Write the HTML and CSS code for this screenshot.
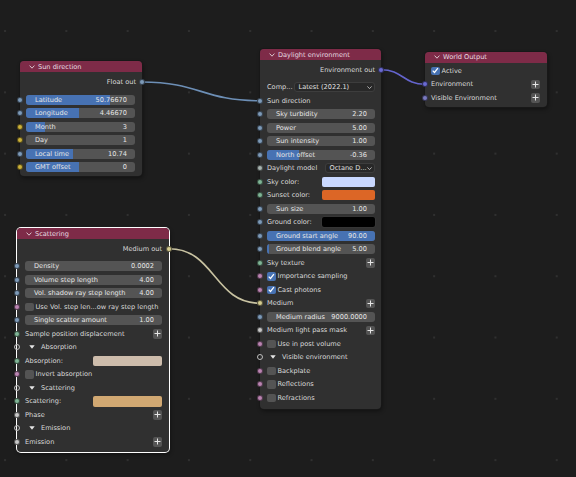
FILE: index.html
```html
<!DOCTYPE html>
<html>
<head>
<meta charset="utf-8">
<link rel="stylesheet" href="styles.css">
</head>
<body>
<div class="canvas">
  <svg class="links" width="576" height="477" viewBox="0 0 576 477">
    <path d="M142 82 C 200 82, 202 100.75, 260 100.75" stroke="#6d8fb6" stroke-width="1.6" fill="none"/>
    <path d="M169 248.75 C 215 248.75, 214 303.25, 260 303.25" stroke="#c9c3a2" stroke-width="1.6" fill="none"/>
    <path d="M381 69.75 C 403 69.75, 403 84.25, 425 84.25" stroke="#6464cc" stroke-width="1.6" fill="none"/>
  </svg>

  <!-- Sun direction -->
  <div class="node sun">
    <div class="hdr"><svg class="chev" width="6" height="4" viewBox="0 0 6 4"><path d="M0.6 0.6 L3 3.2 L5.4 0.6" stroke="#e2d6db" stroke-width="0.9" fill="none"/></svg><span>Sun direction</span></div>
    <div class="body">
      <div class="row out"><span class="lbl">Float out</span><i class="sock r c-float"></i></div>
      <div class="row"><i class="sock c-float"></i><div class="field"><div class="fill" style="width:77%"></div><span class="t">Latitude</span><span class="t">50.76670</span></div></div>
      <div class="row"><i class="sock c-float"></i><div class="field"><div class="fill" style="width:49%"></div><span class="t">Longitude</span><span class="t">4.46670</span></div></div>
      <div class="row"><i class="sock c-int"></i><div class="field"><div class="fill" style="width:17%"></div><span class="t">Month</span><span class="t">3</span></div></div>
      <div class="row"><i class="sock c-int"></i><div class="field"><span class="t">Day</span><span class="t">1</span></div></div>
      <div class="row"><i class="sock c-float"></i><div class="field"><div class="fill" style="width:43%"></div><span class="t">Local time</span><span class="t">10.74</span></div></div>
      <div class="row"><i class="sock c-int"></i><div class="field"><div class="fill" style="width:49%"></div><span class="t">GMT offset</span><span class="t">0</span></div></div>
    </div>
  </div>

  <!-- Scattering -->
  <div class="node scat">
    <div class="hdr"><svg class="chev" width="6" height="4" viewBox="0 0 6 4"><path d="M0.6 0.6 L3 3.2 L5.4 0.6" stroke="#e2d6db" stroke-width="0.9" fill="none"/></svg><span>Scattering</span></div>
    <div class="body">
      <div class="row out"><span class="lbl">Medium out</span><i class="sock r c-med"></i></div>
      <div class="row"><i class="sock c-float"></i><div class="field"><span class="t">Density</span><span class="t">0.0002</span></div></div>
      <div class="row"><i class="sock c-float"></i><div class="field"><span class="t">Volume step length</span><span class="t">4.00</span></div></div>
      <div class="row"><i class="sock c-float"></i><div class="field"><span class="t">Vol. shadow ray step length</span><span class="t">4.00</span></div></div>
      <div class="row"><i class="sock c-bool"></i><i class="cb"></i><span class="lbl cbl">Use Vol. step len...ow ray step length</span></div>
      <div class="row"><i class="sock c-float"></i><div class="field"><span class="t">Single scatter amount</span><span class="t">1.00</span></div></div>
      <div class="row"><i class="sock c-tex"></i><span class="lbl">Sample position displacement</span><span class="plus"><svg width="9" height="9" viewBox="0 0 9 9"><path d="M4.5 1.5v6M1.5 4.5h6" stroke="#e6e6e6" stroke-width="1"/></svg></span></div>
      <div class="row panel"><i class="sock hollow"></i><svg class="tri" width="6" height="4" viewBox="0 0 6 4"><path d="M0.3 0.3h5.4L3 3.8z" fill="#e6e6e6"/></svg><span class="lbl">Absorption</span></div>
      <div class="row"><i class="sock c-tex"></i><span class="lbl">Absorption:</span><span class="sw wide" style="background:#cdbcab"></span></div>
      <div class="row"><i class="sock c-bool"></i><i class="cb"></i><span class="lbl cbl">Invert absorption</span></div>
      <div class="row panel"><i class="sock hollow"></i><svg class="tri" width="6" height="4" viewBox="0 0 6 4"><path d="M0.3 0.3h5.4L3 3.8z" fill="#e6e6e6"/></svg><span class="lbl">Scattering</span></div>
      <div class="row"><i class="sock c-tex"></i><span class="lbl">Scattering:</span><span class="sw wide" style="background:#d1a872"></span></div>
      <div class="row"><i class="sock c-white"></i><span class="lbl">Phase</span><span class="plus"><svg width="9" height="9" viewBox="0 0 9 9"><path d="M4.5 1.5v6M1.5 4.5h6" stroke="#e6e6e6" stroke-width="1"/></svg></span></div>
      <div class="row panel"><i class="sock hollow"></i><svg class="tri" width="6" height="4" viewBox="0 0 6 4"><path d="M0.3 0.3h5.4L3 3.8z" fill="#e6e6e6"/></svg><span class="lbl">Emission</span></div>
      <div class="row"><i class="sock c-white"></i><span class="lbl">Emission</span><span class="plus"><svg width="9" height="9" viewBox="0 0 9 9"><path d="M4.5 1.5v6M1.5 4.5h6" stroke="#e6e6e6" stroke-width="1"/></svg></span></div>
    </div>
  </div>

  <!-- Daylight environment -->
  <div class="node day">
    <div class="hdr"><svg class="chev" width="6" height="4" viewBox="0 0 6 4"><path d="M0.6 0.6 L3 3.2 L5.4 0.6" stroke="#e2d6db" stroke-width="0.9" fill="none"/></svg><span>Daylight environment</span></div>
    <div class="body">
      <div class="row out"><span class="lbl">Environment out</span><i class="sock r c-env"></i></div>
      <div class="row"><span class="lbl comp">Comp...</span><span class="dd grow"><span>Latest (2022.1)</span><svg width="5" height="3" viewBox="0 0 5 3"><path d="M0.4 0.4 L2.5 2.6 L4.6 0.4" stroke="#cfcfcf" stroke-width="0.8" fill="none"/></svg></span></div>
      <div class="row"><i class="sock c-float"></i><span class="lbl">Sun direction</span></div>
      <div class="row"><i class="sock c-float"></i><div class="field"><span class="t">Sky turbidity</span><span class="t">2.20</span></div></div>
      <div class="row"><i class="sock c-float"></i><div class="field"><span class="t">Power</span><span class="t">5.00</span></div></div>
      <div class="row"><i class="sock c-float"></i><div class="field"><span class="t">Sun intensity</span><span class="t">1.00</span></div></div>
      <div class="row"><i class="sock c-float"></i><div class="field"><div class="fill" style="width:30%"></div><span class="t">North offset</span><span class="t">-0.36</span></div></div>
      <div class="row"><i class="sock c-enum"></i><span class="lbl">Daylight model</span><span class="dd small"><span>Octane D...</span><svg width="5" height="3" viewBox="0 0 5 3"><path d="M0.4 0.4 L2.5 2.6 L4.6 0.4" stroke="#cfcfcf" stroke-width="0.8" fill="none"/></svg></span></div>
      <div class="row"><i class="sock c-tex"></i><span class="lbl">Sky color:</span><span class="sw" style="background:#c9d8ff"></span></div>
      <div class="row"><i class="sock c-tex"></i><span class="lbl">Sunset color:</span><span class="sw" style="background:#dc6626"></span></div>
      <div class="row"><i class="sock c-float"></i><div class="field"><span class="t">Sun size</span><span class="t">1.00</span></div></div>
      <div class="row"><i class="sock c-float"></i><span class="lbl">Ground color:</span><span class="sw black"></span></div>
      <div class="row"><i class="sock c-float"></i><div class="field"><div class="fill" style="width:100%"></div><span class="t">Ground start angle</span><span class="t">90.00</span></div></div>
      <div class="row"><i class="sock c-float"></i><div class="field"><div class="fill" style="width:2%"></div><span class="t">Ground blend angle</span><span class="t">5.00</span></div></div>
      <div class="row"><i class="sock c-tex"></i><span class="lbl">Sky texture</span><span class="plus"><svg width="9" height="9" viewBox="0 0 9 9"><path d="M4.5 1.5v6M1.5 4.5h6" stroke="#e6e6e6" stroke-width="1"/></svg></span></div>
      <div class="row"><i class="sock c-bool"></i><i class="cb on"><svg width="9" height="9" viewBox="0 0 9 9"><path d="M1.8 4.6 L3.7 6.6 L7.3 2" stroke="#fff" stroke-width="1.3" fill="none"/></svg></i><span class="lbl cbl">Importance sampling</span></div>
      <div class="row"><i class="sock c-bool"></i><i class="cb on"><svg width="9" height="9" viewBox="0 0 9 9"><path d="M1.8 4.6 L3.7 6.6 L7.3 2" stroke="#fff" stroke-width="1.3" fill="none"/></svg></i><span class="lbl cbl">Cast photons</span></div>
      <div class="row"><i class="sock c-med"></i><span class="lbl">Medium</span><span class="plus"><svg width="9" height="9" viewBox="0 0 9 9"><path d="M4.5 1.5v6M1.5 4.5h6" stroke="#e6e6e6" stroke-width="1"/></svg></span></div>
      <div class="row"><i class="sock c-float"></i><div class="field"><span class="t">Medium radius</span><span class="t">9000.0000</span></div></div>
      <div class="row"><i class="sock c-white"></i><span class="lbl">Medium light pass mask</span><span class="plus"><svg width="9" height="9" viewBox="0 0 9 9"><path d="M4.5 1.5v6M1.5 4.5h6" stroke="#e6e6e6" stroke-width="1"/></svg></span></div>
      <div class="row"><i class="sock c-bool"></i><i class="cb"></i><span class="lbl cbl">Use in post volume</span></div>
      <div class="row panel"><i class="sock hollow"></i><svg class="tri" width="6" height="4" viewBox="0 0 6 4"><path d="M0.3 0.3h5.4L3 3.8z" fill="#e6e6e6"/></svg><span class="lbl">Visible environment</span></div>
      <div class="row"><i class="sock c-bool"></i><i class="cb"></i><span class="lbl cbl">Backplate</span></div>
      <div class="row"><i class="sock c-bool"></i><i class="cb"></i><span class="lbl cbl">Reflections</span></div>
      <div class="row"><i class="sock c-bool"></i><i class="cb"></i><span class="lbl cbl">Refractions</span></div>
    </div>
  </div>

  <!-- World Output -->
  <div class="node world">
    <div class="hdr"><svg class="chev" width="6" height="4" viewBox="0 0 6 4"><path d="M0.6 0.6 L3 3.2 L5.4 0.6" stroke="#e2d6db" stroke-width="0.9" fill="none"/></svg><span>World Output</span></div>
    <div class="body">
      <div class="row"><i class="cb on"><svg width="9" height="9" viewBox="0 0 9 9"><path d="M1.8 4.6 L3.7 6.6 L7.3 2" stroke="#fff" stroke-width="1.3" fill="none"/></svg></i><span class="lbl cbl">Active</span></div>
      <div class="row"><i class="sock c-env"></i><span class="lbl">Environment</span><span class="plus"><svg width="9" height="9" viewBox="0 0 9 9"><path d="M4.5 1.5v6M1.5 4.5h6" stroke="#e6e6e6" stroke-width="1"/></svg></span></div>
      <div class="row"><i class="sock c-env2"></i><span class="lbl">Visible Environment</span><span class="plus"><svg width="9" height="9" viewBox="0 0 9 9"><path d="M4.5 1.5v6M1.5 4.5h6" stroke="#e6e6e6" stroke-width="1"/></svg></span></div>
    </div>
  </div>
</div>
</body>
</html>
```

FILE: styles.css
```css
* { box-sizing: border-box; }
html, body { margin: 0; padding: 0; }
body {
  width: 576px;
  height: 477px;
  overflow: hidden;
  background: #1d1d1d;
  font-family: "DejaVu Sans", "Liberation Sans", sans-serif;
  font-size: 6.6px;
  color: #dadada;
}
.canvas {
  position: relative;
  width: 576px;
  height: 477px;
  background-color: #1d1d1d;
  background-image: radial-gradient(circle, #303030 0.8px, transparent 1.2px);
  background-size: 61.3px 61.3px;
  background-position: -25.6px 0.4px;
}
.links { position: absolute; left: 0; top: 0; }

.node {
  position: absolute;
  background: #303030;
  border-radius: 4px;
  box-shadow: 0 0 0 1px #181818, 1px 2px 4px rgba(0,0,0,0.45);
}
.node.sun { left: 20px; top: 61.25px; width: 122px; }
.node.scat { left: 17px; top: 228px; width: 152px; box-shadow: 0 0 0 1px #ffffff, 1px 2px 4px rgba(0,0,0,0.45); }
.node.day { left: 260px; top: 49px; width: 121px; }
.node.world { left: 425px; top: 51.5px; width: 122px; }

.hdr {
  height: 11px;
  background: #7e2b48;
  border-radius: 4px 4px 0 0;
  display: flex;
  align-items: center;
  padding-left: 9px;
  gap: 3px;
  color: #e6dce0;
  white-space: nowrap;
}
.chev { flex: none; }

.body { display: flex; flex-direction: column; padding: 3px 0 2.5px; }
.world .body { padding-top: 1.5px; padding-bottom: 2px; }
.scat .body { padding-bottom: 3.5px; }
.day .body { padding-bottom: 4px; }

.row {
  position: relative;
  height: 13.5px;
  display: flex;
  align-items: center;
  padding: 0 6px 0 7px;
  white-space: nowrap;
}
.sun .row { padding: 0 7px 0 6px; }
.scat .row { padding: 0 7px 0 8px; }
.world .row { padding: 0 7px 0 6px; }
.row.out { justify-content: flex-end; margin-bottom: 4px; }
.sun .row.out { padding-right: 6px; }

.lbl { color: #dadada; }
.cbl { margin-left: 2px; }
.row.panel .tri { margin-left: 4px; margin-right: 6px; flex: none; }
.day .row.panel .tri { margin-left: 3px; }

.sock {
  position: absolute;
  left: -3px;
  top: 50%;
  width: 6px;
  height: 6px;
  margin-top: -3px;
  border-radius: 50%;
  border: 0.8px solid rgba(0,0,0,0.55);
}
.sock.r { left: auto; right: -3px; }
.c-float { background: #7d9ab8; }
.c-int { background: #cdb23a; }
.c-tex { background: #7fb596; }
.c-bool { background: #bb84b2; }
.c-white { background: #c8c8c8; }
.c-med { background: #d6cd90; }
.c-env { background: #6a6ad2; }
.c-env2 { background: #7a7ac0; }
.c-enum { background: #a8b4b0; }
.sock.hollow { background: transparent; border: 0.8px solid #bdbdbd; }

.field {
  position: relative;
  flex: 1;
  height: 10px;
  background: #545454;
  border-radius: 3px;
  overflow: hidden;
  display: flex;
  align-items: center;
  justify-content: space-between;
  padding: 0 8px 0 9px;
  color: #e6e6e6;
}
.fill { position: absolute; left: 0; top: 0; bottom: 0; background: #4772b3; }
.field .t { position: relative; }

.dd {
  height: 10px;
  background: #282828;
  border: 1px solid #3d3d3d;
  border-radius: 3px;
  display: flex;
  align-items: center;
  justify-content: space-between;
  padding: 0 2px 0 4px;
  color: #e0e0e0;
  overflow: hidden;
}
.dd.grow { flex: 1; }
.dd.small { width: 50.5px; margin-left: auto; }
.comp { width: 26.5px; flex: none; }

.sw {
  margin-left: auto;
  width: 53.5px;
  height: 10px;
  border-radius: 2px;
}
.sw.wide { width: 69px; height: 10.5px; }
.sw.black { background: #000000; box-shadow: 0 0 0 0.6px #3a3a3a; }

.plus {
  margin-left: auto;
  width: 9.5px;
  height: 9.5px;
  border-radius: 2px;
  background: #545454;
  display: flex;
  align-items: center;
  justify-content: center;
}
.plus svg { display: block; }

.cb {
  flex: none;
  width: 8.5px;
  height: 8.5px;
  border-radius: 2px;
  background: #545454;
  display: flex;
  align-items: center;
  justify-content: center;
}
.cb.on { background: #4772b3; }
.cb svg { display: block; }
```
